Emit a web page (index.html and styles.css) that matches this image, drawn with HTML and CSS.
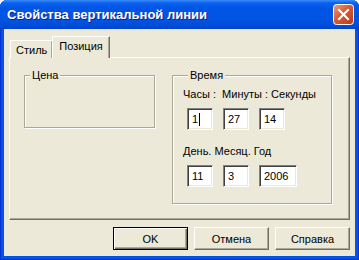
FILE: index.html
```html
<!DOCTYPE html>
<html lang="ru">
<head>
    <meta charset="UTF-8">
    <title>Свойства вертикальной линии</title>
    <link rel="stylesheet" href="styles.css">
</head>
<body>
<div class="window">
    <div class="titlebar">
        <span class="title">Свойства вертикальной линии</span>
        <span class="close">
            <svg width="21" height="21" viewBox="0 0 21 21">
                <defs>
                    <linearGradient id="cg" x1="0" y1="0" x2="1" y2="1">
                        <stop offset="0" stop-color="#EBA080"/>
                        <stop offset="0.45" stop-color="#DA5A35"/>
                        <stop offset="1" stop-color="#B83A16"/>
                    </linearGradient>
                </defs>
                <rect x="0.5" y="0.5" width="20" height="20" rx="3" fill="url(#cg)" stroke="#fff"/>
                <path d="M6 6 L15 15 M15 6 L6 15" stroke="#fff" stroke-width="2" stroke-linecap="square"/>
            </svg>
        </span>
    </div>
    <div class="content">
        <div class="tabs">
            <div class="tab">Стиль</div>
            <div class="tab active">Позиция</div>
        </div>
        <div class="panel">
            <fieldset class="group price">
                <legend>Цена</legend>
            </fieldset>
            <fieldset class="group time">
                <legend>Время</legend>
                <div class="caption">Часы :&nbsp; Минуты : Секунды</div>
                <div class="fields">
                    <div class="field">1<span class="caret"></span></div>
                    <div class="field">27</div>
                    <div class="field">14</div>
                </div>
                <div class="caption second">День. Месяц. Год</div>
                <div class="fields">
                    <div class="field">11</div>
                    <div class="field">3</div>
                    <div class="field year">2006</div>
                </div>
            </fieldset>
        </div>
        <div class="buttons">
            <button class="btn default">OK</button>
            <button class="btn">Отмена</button>
            <button class="btn">Справка</button>
        </div>
    </div>
</div>
</body>
</html>
```

FILE: styles.css
```css
body {
    margin: 0;
    background: #fff;
    font-family: "Liberation Sans", Arial, sans-serif;
    font-size: 11px;
    color: #000;
}
.window {
    width: 359px;
    height: 260px;
    background: #0553E3;
    border-radius: 7px 7px 0 0;
    display: flex;
    flex-direction: column;
    overflow: hidden;
    box-shadow: inset 1px 0 #0831D9, inset -1px -1px #0831D9;
}
.titlebar {
    height: 29px;
    flex: none;
    display: flex;
    align-items: center;
    justify-content: space-between;
    padding: 0 5px 0 7px;
    background: linear-gradient(#3D8BF8 0, #0A61F0 3px, #0055E5 8px, #0054E3 20px, #004CD8 26px, #0043C5 29px);
}
.title {
    color: #fff;
    font-weight: bold;
    font-size: 13px;
    text-shadow: 1px 1px #0F1F8F;
}
.close {
    width: 21px;
    height: 21px;
    display: flex;
}
.content {
    flex: 1;
    margin: 0 4px 4px;
    background: #ECE9D8;
    padding: 7px 0 0 5px;
}
.tabs {
    display: flex;
    align-items: flex-end;
    height: 22px;
    padding-left: 1px;
    position: relative;
    z-index: 1;
    margin-bottom: -1px;
}
.tab {
    height: 18px;
    padding: 0 5px;
    box-sizing: border-box;
    border: 1px solid;
    border-bottom: 0;
    border-color: #fff #716F64 #fff #fff;
    box-shadow: inset -1px 0 #ACA899;
    background: #ECE9D8;
    display: flex;
    align-items: center;
}
.tab.active {
    height: 22px;
    padding: 0 6px 3px;
    margin-left: -1px;
}
.panel {
    width: 341px;
    height: 163px;
    box-sizing: border-box;
    border: 1px solid;
    border-color: #fff #716F64 #716F64 #fff;
    box-shadow: inset -1px -1px #ACA899;
    display: flex;
    align-items: flex-start;
    gap: 17px;
    padding: 11px 0 0 14px;
}
.group {
    margin: 0;
    padding: 0;
    min-width: 0;
    box-sizing: border-box;
    border: 1px solid #ACA899;
    box-shadow: 1px 1px #fff, inset 1px 1px #fff;
}
.group legend {
    margin-left: 5px;
    padding: 0 2px;
    line-height: 13px;
    background: #ECE9D8;
}
.price {
    width: 131px;
    height: 59px;
}
.time {
    width: 160px;
    height: 135px;
    padding-left: 10px;
}
.caption {
    line-height: 13px;
    margin-top: 6px;
}
.caption.second {
    margin-top: 15px;
}
.fields {
    display: flex;
    gap: 10px;
    margin: 7px 0 0 4px;
}
.field {
    width: 26px;
    height: 22px;
    box-sizing: border-box;
    background: #fff;
    border: 1px solid;
    border-color: #808080 #fff #fff #808080;
    box-shadow: inset 1px 1px #404040, inset -1px -1px #ECE9D8;
    padding-left: 4px;
    display: flex;
    align-items: center;
}
.field.year {
    width: 38px;
}
.caret {
    width: 1px;
    height: 13px;
    background: #000;
    margin-left: 1px;
}
.buttons {
    display: flex;
    justify-content: flex-end;
    gap: 6px;
    margin-top: 7px;
    padding-right: 5px;
}
.btn {
    width: 75px;
    height: 23px;
    box-sizing: border-box;
    padding: 0;
    font: inherit;
    color: #000;
    background: #ECE9D8;
    border: 1px solid;
    border-color: #fff #716F64 #716F64 #fff;
    box-shadow: inset -1px -1px #ACA899;
}
.btn.default {
    border-color: #000;
    box-shadow: inset 1px 1px #fff, inset -1px -1px #716F64, inset -2px -2px #ACA899;
}
```
